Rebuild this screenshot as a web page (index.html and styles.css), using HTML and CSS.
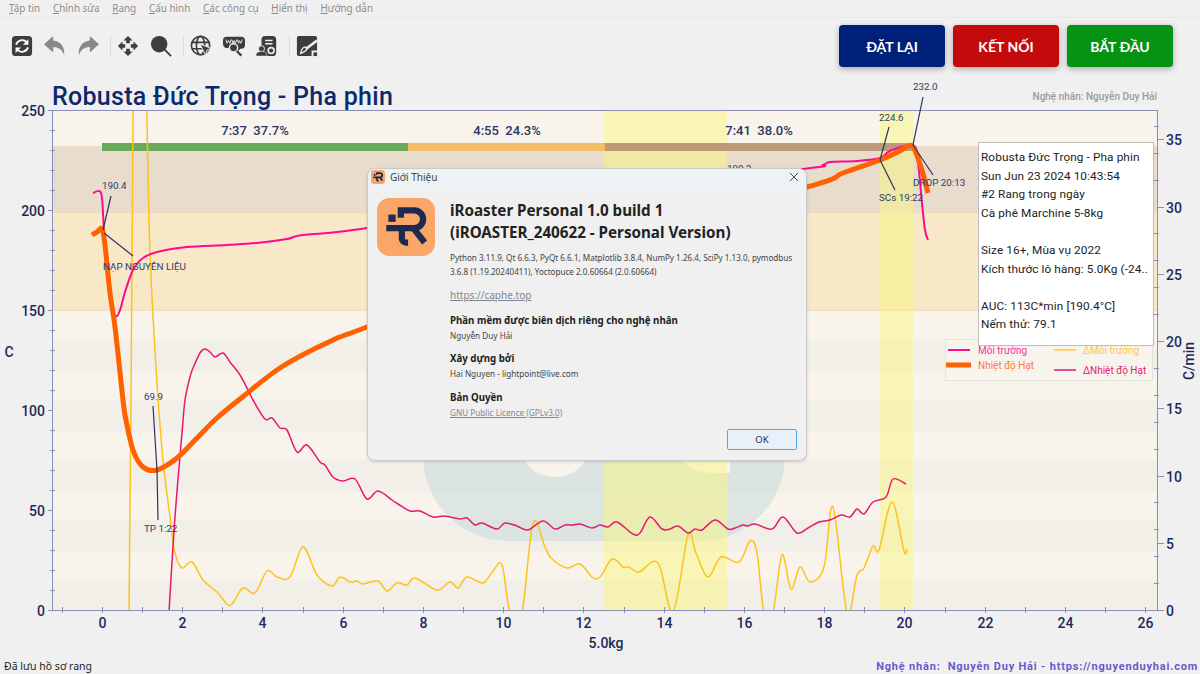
FILE: index.html
```html
<!DOCTYPE html>
<html lang="vi">
<head>
  <meta charset="utf-8">
  <title>iRoaster Personal</title>
  <link rel="stylesheet" href="styles.css">
</head>
<body>
  <div class="menubar">
    <span class="menu-item"><u>T</u>ập tin</span>
    <span class="menu-item"><u>C</u>hỉnh sửa</span>
    <span class="menu-item"><u>R</u>ang</span>
    <span class="menu-item"><u>C</u>ấu hình</span>
    <span class="menu-item"><u>C</u>ác công cụ</span>
    <span class="menu-item"><u>H</u>iển thị</span>
    <span class="menu-item"><u>H</u>ướng dẫn</span>
  </div>

  <div class="toolbar">
    <div class="tools">
      <svg class="tool" viewBox="0 0 24 24"><rect x="1" y="1" width="22" height="22" rx="4" fill="#3d3d3d"/><path d="M5.500 10.500a6.800 6.800 0 0 1 11.600-2.600M18.500 13.500a6.800 6.800 0 0 1-11.600 2.600" fill="none" stroke="#fff" stroke-width="2"/><path d="M19 4.500v6h-6zM5 19.500v-6h6z" fill="#fff"/></svg>
      <svg class="tool" viewBox="0 0 24 24"><path d="M10 6V1L0 10l10 9v-6c6 0 10 3 12 9 1-9-4-15-12-16z" fill="#888"/></svg>
      <svg class="tool tool-flip" viewBox="0 0 24 24"><path d="M10 6V1L0 10l10 9v-6c6 0 10 3 12 9 1-9-4-15-12-16z" fill="#888"/></svg>
      <i class="tool-sep"></i>
      <svg class="tool" viewBox="0 0 24 24"><path d="M10 9h4V6h3l-5-5-5 5h3v3zm-1 1H6V7l-5 5 5 5v-3h3v-4zm14 2l-5-5v3h-3v4h3v3l5-5zm-9 3h-4v3H7l5 5 5-5h-3v-3z" fill="#3d3d3d"/></svg>
      <svg class="tool" viewBox="0 0 24 24"><circle cx="10" cy="10" r="9" fill="#3d3d3d"/><path d="M16 16l7 7" stroke="#3d3d3d" stroke-width="2"/></svg>
      <i class="tool-sep"></i>
      <svg class="tool" viewBox="0 0 24 24"><g fill="none" stroke="#3d3d3d" stroke-width="1.800"><circle cx="11.500" cy="11.500" r="10"/><ellipse cx="11.500" cy="11.500" rx="4.500" ry="10"/><path d="M2 8h19M2 15h19"/></g><path d="M11 10l12 4.500-4.500 2-1.500 5.500z" fill="#3d3d3d" stroke="#f0f0f0"/></svg>
      <svg class="tool" viewBox="0 0 24 24"><path d="M4 2h16a4 4 0 0 1 4 4v5a4 4 0 0 1-4 4h-1l-2 2-8 0-3-3A4.500 4.500 0 0 1 0 10V6a4 4 0 0 1 4-4z" fill="#3d3d3d"/><path d="M3 5l1.500 4L6 6l1.500 3L9 5M9.500 5l1.500 4 1-3 1.500 3L15 5M15.500 5l1.500 4 1-3 1.500 3L21 5" fill="none" stroke="#f0f0f0" stroke-width="1"/><circle cx="11.500" cy="14" r="4.500" fill="#3d3d3d" stroke="#f0f0f0" stroke-width="1.500"/><path d="M15 17.500l5 5" stroke="#3d3d3d" stroke-width="2.500"/></svg>
      <svg class="tool" viewBox="0 0 24 24"><rect x="6" y="1" width="16" height="22" rx="4" fill="#3d3d3d"/><path d="M10 6h8M10 9.500h8" stroke="#f0f0f0" stroke-width="1.500"/><circle cx="16.500" cy="17" r="3.200" fill="none" stroke="#f0f0f0" stroke-width="1.800"/><circle cx="6" cy="15" r="3.300" fill="#3d3d3d" stroke="#f0f0f0"/><path d="M0 23c0-4 2-5 6-5s6 1 6 5z" fill="#3d3d3d" stroke="#f0f0f0" stroke-width=".6"/></svg>
      <i class="tool-sep"></i>
      <svg class="tool" viewBox="0 0 24 24"><path d="M3 1h18a2 2 0 0 1 2 2v14h-6v6H3a2 2 0 0 1-2-2V3a2 2 0 0 1 2-2z" fill="#3d3d3d"/><path d="M23 6L11 15" stroke="#f0f0f0" stroke-width="3"/><path d="M10 13c-3 0-4 3-5 7 3-1 6-2 7-5z" fill="none" stroke="#f0f0f0" stroke-width="1.500"/><rect x="19" y="19" width="4" height="4" fill="#3d3d3d"/></svg>
    </div>
    <div class="actions">
      <button class="action action-reset">ĐẶT LẠI</button>
      <button class="action action-connect">KẾT NỐI</button>
      <button class="action action-start">BẮT ĐẦU</button>
    </div>
  </div>

  <div class="chart">
    <svg id="plot" class="plot" viewBox="0 78 1200 580" width="1200" height="580">
      <defs>
        <clipPath id="plotClip"><rect x="52" y="110" width="1106" height="500"/></clipPath>
      </defs>

      <!-- background bands -->
      <rect x="52" y="110" width="1106" height="500" fill="#f8f4ec"/>
      <rect x="52" y="146" width="1106" height="66" fill="#e8dccd"/>
      <rect x="52" y="212" width="1106" height="98" fill="#f9e8c8"/>
      <rect x="52" y="211" width="1106" height="2" fill="#eedcc0"/>
      <rect x="52" y="309" width="1106" height="2" fill="#f0e2c6"/>
      <rect x="52" y="340" width="1106" height="32" fill="#f2efe8"/>
      <rect x="52" y="400" width="1106" height="32" fill="#f2efe8"/>
      <rect x="52" y="460" width="1106" height="32" fill="#f2efe8"/>
      <rect x="52" y="520" width="1106" height="32" fill="#f2efe8"/>
      <rect x="52" y="580" width="1106" height="30" fill="#f2efe8"/>

      <!-- faded logo -->
      <path d="M423 300H785V456a85 85 0 0 1-85 85H508a85 85 0 0 1-85-85Z" fill="#c8dad8" fill-opacity=".55"/>
      <circle cx="555" cy="440" r="37" fill="#f8f4ec"/>
      <path d="M672 440Q680 473 712 473H730V440Z" fill="#f8f4ec"/>

      <!-- phase spans -->
      <rect x="604" y="110" width="123" height="500" fill="#f8f680" fill-opacity=".5"/>
      <rect x="880" y="110" width="33" height="500" fill="#f8f680" fill-opacity=".5"/>

      <!-- phase bar -->
      <rect x="102" y="143" width="306" height="8" fill="#6aa85a"/>
      <rect x="408" y="143" width="197" height="8" fill="#f5bc68"/>
      <rect x="605" y="143" width="307" height="8" fill="#bc9a78"/>
      <text class="phase" x="255" y="135">7:37  37.7%</text>
      <text class="phase" x="507" y="135">4:55  24.3%</text>
      <text class="phase" x="759" y="135">7:41  38.0%</text>

      <g id="curves" clip-path="url(#plotClip)"></g>
      <g id="axes"></g>

      <!-- annotations -->
      <g class="lead">
        <path d="M111 196L103 230"/>
        <path d="M104 233L133 256"/>
        <path d="M153 406L157 470L158 520"/>
        <path d="M889 127L880 160L895 190"/>
        <path d="M923 97L913 145L933 175"/>
      </g>
      <text class="note" x="102" y="189">190.4</text>
      <text class="note" x="103" y="270">NẠP NGUYÊN LIỆU</text>
      <text class="note" x="144" y="400">69.9</text>
      <text class="note" x="144" y="532">TP 1:22</text>
      <text class="note" x="727" y="172">190.2</text>
      <text class="note" x="879" y="121">224.6</text>
      <text class="note" x="879" y="201">SCs 19:22</text>
      <text class="note" x="913" y="90">232.0</text>
      <text class="note" x="913" y="186">DROP 20:13</text>

      <!-- legend -->
      <rect x="945.500" y="339.500" width="207" height="41" fill="#f8f5ef" fill-opacity=".85" stroke="#e4e2dc"/>
      <path d="M948 350H970" stroke="#ff0a8c" stroke-width="2"/>
      <path d="M946 365H971" stroke="#ff6000" stroke-width="5"/>
      <path d="M1054 350H1076" stroke="#ffc83c" stroke-width="1.500"/>
      <path d="M1054 370H1076" stroke="#e8186e" stroke-width="1.500"/>
      <text class="legend-text" x="978" y="354" fill="#ff2e9e">Môi trường</text>
      <text class="legend-text" x="978" y="369" fill="#ff7a3d">Nhiệt độ Hạt</text>
      <text class="legend-text" x="1083" y="354" fill="#ffc83c">ΔMôi trường</text>
      <text class="legend-text" x="1083" y="374" fill="#e8186e">ΔNhiệt độ Hạt</text>

      <!-- titles -->
      <text class="title" x="52" y="105">Robusta Đức Trọng - Pha phin</text>
      <text class="byline" x="1157" y="100">Nghệ nhân: Nguyễn Duy Hải</text>
      <text class="axis-name" x="606" y="648">5.0kg</text>
      <text class="axis-name" x="9" y="357">C</text>
      <text class="axis-name" transform="translate(1194 361) rotate(-90)">C/min</text>
    </svg>

    <div class="infobox">
      <div>Robusta Đức Trọng - Pha phin</div>
      <div>Sun Jun 23 2024 10:43:54</div>
      <div>#2 Rang trong ngày</div>
      <div>Cà phê Marchine 5-8kg</div>
      <div>&nbsp;</div>
      <div>Size 16+, Mùa vụ 2022</div>
      <div>Kích thước lô hàng: 5.0Kg (-24..</div>
      <div>&nbsp;</div>
      <div>AUC: 113C*min [190.4°C]</div>
      <div>Nếm thử: 79.1</div>
    </div>

    <div class="dialog">
      <div class="dialog-title">
        <svg class="logo-small" viewBox="0 0 56 56"><rect width="56" height="56" rx="12" fill="#f9a668"/><g fill="none" stroke="#1b2a4e" stroke-width="7"><path d="M23 19V12H36a8 8 0 0 1 0 17H9"/><path d="M24 29V39a4 4 0 0 0 4 4h2"/><path d="M35 29L46 43"/></g><rect x="11" y="16" width="7" height="7" fill="#1b2a4e"/></svg>
        <span class="dialog-caption">Giới Thiệu</span>
        <svg class="dialog-close" viewBox="0 0 12 12"><path d="M1 1L11 11M11 1L1 11" stroke="#333" stroke-width="1"/></svg>
      </div>
      <div class="dialog-body">
        <svg class="logo" viewBox="0 0 56 56"><rect width="56" height="56" rx="12" fill="#f9a668"/><g fill="none" stroke="#1b2a4e" stroke-width="6"><path d="M23 19V12H36a8 8 0 0 1 0 17H9"/><path d="M24 29V39a4 4 0 0 0 4 4h2"/><path d="M35 29L46 43"/></g><rect x="11" y="16" width="7" height="7" fill="#1b2a4e"/></svg>
        <div class="about">
          <h2 class="about-name">iRoaster Personal 1.0 build 1<br>(iROASTER_240622 - Personal Version)</h2>
          <p class="about-libs">Python 3.11.9, Qt 6.6.3, PyQt 6.6.1, Matplotlib 3.8.4, NumPy 1.26.4, SciPy 1.13.0, pymodbus 3.6.8 (1.19.20240411), Yoctopuce 2.0.60664 (2.0.60664)</p>
          <a class="about-site">https://caphe.top</a>
          <h3 class="about-head">Phần mềm được biên dịch riêng cho nghệ nhân</h3>
          <p class="about-line">Nguyễn Duy Hải</p>
          <h3 class="about-head">Xây dựng bởi</h3>
          <p class="about-line">Hai Nguyen - lightpoint@live.com</p>
          <h3 class="about-head">Bản Quyền</h3>
          <a class="about-line about-link">GNU Public Licence (GPLv3.0)</a>
        </div>
      </div>
      <div class="dialog-foot"><button class="ok-button">OK</button></div>
    </div>
  </div>

  <div class="statusbar">
    <span class="status-left">Đã lưu hồ sơ rang</span>
    <span class="status-right">Nghệ nhân:  Nguyễn Duy Hải - https://nguyenduyhai.com</span>
  </div>

  <script src="chart.js"></script>
</body>
</html>
```

FILE: styles.css
```css
* {
  box-sizing: border-box;
}

body {
  margin: 0;
  width: 1200px;
  height: 674px;
  overflow: hidden;
  display: flex;
  flex-direction: column;
  background-color: #f0f0f0;
  font-family: "Noto Sans", sans-serif;
}

.menubar {
  height: 18px;
  display: flex;
  align-items: center;
  gap: 12.8px;
  padding: 0 0 1px 9px;
  border-bottom: 1px solid #e6e6e6;
  font-size: 9.9px;
  color: #8c8c8c;
}

.toolbar {
  height: 60px;
  display: flex;
  justify-content: space-between;
  padding: 7px 27px 0 11px;
}

.tools {
  display: flex;
  align-items: center;
  height: 42px;
}

.tool {
  width: 22px;
  height: 22px;
  margin-right: 11px;
  flex: none;
}

.tool-flip {
  transform: scaleX(-1);
}

.tool-sep {
  width: 1px;
  height: 22px;
  margin-right: 6px;
  background-color: #dcdcdc;
  flex: none;
}

.actions {
  display: flex;
  gap: 8px;
  height: 42px;
}

.action {
  width: 106px;
  height: 42px;
  border: none;
  border-radius: 4px;
  color: white;
  font-family: Lato, sans-serif;
  font-size: 14px;
  font-weight: 700;
  box-shadow: 0 2px 6px rgba(0, 0, 0, 0.3);
}

.action-reset {
  background-color: #00217a;
}

.action-connect {
  background-color: #c40a0a;
}

.action-start {
  background-color: #049313;
}

.chart {
  position: relative;
  height: 580px;
}

.plot {
  display: block;
  font-family: Roboto, sans-serif;
}

.phase {
  font-size: 13px;
  font-weight: 500;
  fill: #2a3565;
  text-anchor: middle;
  white-space: pre;
}

.lead path {
  fill: none;
  stroke: #2a3565;
  stroke-width: 1.2;
}

.note {
  font-size: 9.8px;
  fill: #2f3a6e;
}

.legend-text {
  font-size: 10px;
}

.title {
  font-size: 25px;
  font-weight: 500;
  fill: #0c2a6b;
  letter-spacing: 0.28px;
}

.byline {
  font-size: 10px;
  font-weight: 500;
  fill: #9a9a9a;
  text-anchor: end;
}

.axis-name {
  font-size: 14px;
  font-weight: 500;
  fill: #1f2a5c;
  text-anchor: middle;
}

.tick-label {
  font-size: 14px;
  font-weight: 500;
  fill: #1f2a5c;
}

.infobox {
  position: absolute;
  left: 978px;
  top: 64px;
  width: 176px;
  height: 204px;
  padding: 5px 0 0 2px;
  background-color: white;
  border: 1px solid #bdbdbd;
  font-family: Roboto, sans-serif;
  font-size: 11.8px;
  letter-spacing: 0.1px;
  line-height: 18.6px;
  color: #222;
  white-space: nowrap;
}

.dialog {
  position: absolute;
  left: 367px;
  top: 90px;
  width: 440px;
  height: 293px;
  display: flex;
  flex-direction: column;
  background-color: #f0f0f0;
  border: 1px solid #cacaca;
  border-radius: 8px;
  box-shadow: 0 1px 3px rgba(0, 0, 0, 0.15);
  overflow: hidden;
  color: #222;
}

.dialog-title {
  height: 22px;
  display: flex;
  align-items: center;
  padding: 0 7px 3px 3px;
  background-color: #edf2f4;
}

.logo-small {
  width: 14px;
  height: 14px;
}

.dialog-caption {
  margin-left: 5px;
  font-size: 10px;
  color: #444;
}

.dialog-close {
  width: 10px;
  height: 10px;
  margin-left: auto;
}

.dialog-body {
  display: flex;
  gap: 15px;
  padding: 9px 12px 0 9px;
}

.logo {
  width: 58px;
  height: 58px;
  flex: none;
}

.about {
  min-width: 0;
}

.about-name {
  margin: 1px 0 8px;
  font-size: 15.2px;
  line-height: 22px;
  font-weight: 700;
  white-space: nowrap;
  color: #222;
}

.about-libs {
  margin: 0 0 8px;
  font-size: 8.1px;
  line-height: 14.5px;
  color: #444;
}

.about-site {
  display: block;
  margin-bottom: 12px;
  font-size: 10px;
  line-height: 14px;
  color: #7d8790;
  text-decoration: underline;
}

.about-head {
  margin: 0;
  font-size: 9.7px;
  line-height: 14px;
  font-weight: 700;
  color: #222;
}

.about-line {
  display: block;
  margin: 1px 0 10.5px;
  font-size: 8.2px;
  line-height: 13px;
  color: #444;
}

.about-link {
  color: #7d8790;
  text-decoration: underline;
}

.dialog-foot {
  display: flex;
  justify-content: flex-end;
  margin-top: auto;
  padding: 0 9px 10px 0;
}

.ok-button {
  width: 70px;
  height: 21px;
  padding: 0;
  background-color: #e8f1f9;
  border: 1px solid #56a7e6;
  border-radius: 2px;
  font-family: "Noto Sans", sans-serif;
  font-size: 9.5px;
  color: #333;
}

.statusbar {
  height: 16px;
  display: flex;
  justify-content: space-between;
  align-items: center;
  padding: 0 2px 0 4px;
}

.status-left {
  font-size: 10.5px;
  color: #222;
}

.status-right {
  font-family: Roboto, sans-serif;
  font-size: 11px;
  font-weight: 700;
  color: #6a5acd;
  letter-spacing: 0.8px;
  white-space: pre;
}
```

FILE: chart.js
```js
var SVG_NS = 'http://www.w3.org/2000/svg';

// curve points are read off in page pixels
var ET = [[93,193],[99,191],[102,198],[104,230],[108,277],[113,310],[117,316],[121,307],[125,292],[133,270],[143,258],[157,252],[187,247],[227,245],[257,243],[287,239],[303,235],[367,228],[600,190],[803,169],[823,165],[830,162],[857,161],[880,158],[890,151],[913,145],[918,163],[922,203],[925,230],[928,240]];
var BT = [[92,235],[97,232],[102,229],[105,245],[110,293],[115,327],[123,400],[126,420],[133,450],[143,467],[157,470],[177,458],[197,438],[217,418],[245,395],[283,366],[333,340],[367,327],[600,240],[807,187],[843,173],[880,160],[900,151],[912,146],[921,167],[928,193]];
var DBT = [[169,612],[175,517],[182,433],[185,400],[190,377],[193,368],[200,353],[205,349],[210,352],[215,357],[223,353],[230,362],[240,375],[248,390],[253,400],[265,419],[272,418],[280,428],[287,430],[297,452],[307,445],[320,462],[325,465],[333,477],[343,481],[355,479],[367,499],[378,491],[392,500],[398,504],[410,511],[420,511],[433,517],[443,516],[450,517],[460,519],[467,518],[475,525],[482,523],[497,529],[505,523],[517,526],[528,530],[543,521],[555,529],[565,525],[573,525],[580,524],[592,528],[600,525],[608,527],[617,522],[633,534],[640,533],[650,517],[662,529],[670,529],[678,526],[688,533],[695,529],[702,530],[715,520],[728,529],[735,528],[743,525],[748,526],[755,524],[772,529],[783,517],[797,533],[808,528],[819,522],[830,520],[841,515],[850,517],[857,509],[864,514],[873,502],[886,497],[893,479],[906,484]];
var DET = [[129,612],[131,400],[133,120],[134,60],[146,60],[147,120],[150,253],[157,383],[163,460],[170,517],[175,553],[182,568],[192,562],[203,580],[217,592],[227,604],[232,604],[243,588],[255,593],[267,571],[277,577],[290,577],[303,547],[317,575],[332,586],[340,577],[350,582],[357,581],[363,584],[378,581],[387,591],[397,583],[407,585],[415,578],[437,590],[450,582],[458,588],[467,577],[483,583],[493,571],[502,565],[510,612],[522,612],[533,523],[545,547],[551,558],[567,568],[580,564],[592,577],[600,577],[612,559],[623,567],[629,567],[639,572],[658,563],[673,612],[688,535],[696,553],[708,577],[721,557],[739,562],[750,541],[757,553],[764,612],[773,612],[782,555],[791,589],[800,567],[810,582],[824,567],[833,507],[847,612],[857,575],[864,568],[873,546],[879,550],[892,502],[904,551],[907,549]];

function smoothPath(points) {
  var d = 'M' + points[0][0] + ' ' + points[0][1];
  for (var i = 0; i < points.length - 1; i++) {
    var p0 = points[i - 1] || points[i];
    var p1 = points[i];
    var p2 = points[i + 1];
    var p3 = points[i + 2] || p2;
    var c1x = p1[0] + (p2[0] - p0[0]) / 6;
    var c1y = p1[1] + (p2[1] - p0[1]) / 6;
    var c2x = p2[0] - (p3[0] - p1[0]) / 6;
    var c2y = p2[1] - (p3[1] - p1[1]) / 6;
    d += 'C' + c1x.toFixed(1) + ' ' + c1y.toFixed(1) + ' ' + c2x.toFixed(1) + ' ' + c2y.toFixed(1) + ' ' + p2[0] + ' ' + p2[1];
  }
  return d;
}

function addCurve(points, color, width) {
  var path = document.createElementNS(SVG_NS, 'path');
  path.setAttribute('d', smoothPath(points));
  path.setAttribute('fill', 'none');
  path.setAttribute('stroke', color);
  path.setAttribute('stroke-width', width);
  path.setAttribute('stroke-linejoin', 'round');
  document.getElementById('curves').appendChild(path);
}

function addLine(x1, y1, x2, y2) {
  var line = document.createElementNS(SVG_NS, 'line');
  line.setAttribute('x1', x1);
  line.setAttribute('y1', y1);
  line.setAttribute('x2', x2);
  line.setAttribute('y2', y2);
  line.setAttribute('stroke', '#8a8fb8');
  line.setAttribute('stroke-width', 1);
  document.getElementById('axes').appendChild(line);
}

function addLabel(x, y, text, anchor) {
  var label = document.createElementNS(SVG_NS, 'text');
  label.setAttribute('class', 'tick-label');
  label.setAttribute('x', x);
  label.setAttribute('y', y);
  label.setAttribute('text-anchor', anchor);
  label.textContent = text;
  document.getElementById('axes').appendChild(label);
}

function drawAxes() {
  addLine(52, 110.5, 1158, 110.5);
  addLine(52.5, 110, 52.5, 610);
  addLine(1157.5, 110, 1157.5, 610);
  addLine(52, 610.5, 1158, 610.5);

  // left axis, degrees
  for (var t = 0; t <= 250; t += 10) {
    var y = 610.5 - t * 2;
    if (t % 50 === 0) {
      addLine(48, y, 53, y);
      addLabel(45, y + 5, String(t), 'end');
    } else {
      addLine(50, y, 55, y);
    }
  }

  // bottom axis, minutes
  for (var m = -1; m <= 26; m++) {
    var x = Math.round(102 + m * 40.12) + 0.5;
    addLine(x, 607, x, 613);
    if (m % 2 === 0) {
      addLabel(x, 628, String(m), 'middle');
    }
  }

  // right axis, C/min
  for (var r = 0; r <= 36; r++) {
    var ry = Math.round(610 - r * 13.45) + 0.5;
    if (r % 5 === 0) {
      addLine(1157, ry, 1164, ry);
      addLabel(1166, ry + 5, String(r), 'start');
    } else if (r % 2 === 0) {
      addLine(1154, ry, 1159, ry);
    }
  }
}

addCurve(DET, '#ffc21a', 1.5);
addCurve(DBT, '#e8186e', 1.5);
addCurve(ET, '#ff0a8c', 2);
addCurve(BT, '#ff6000', 5);
drawAxes();
```
